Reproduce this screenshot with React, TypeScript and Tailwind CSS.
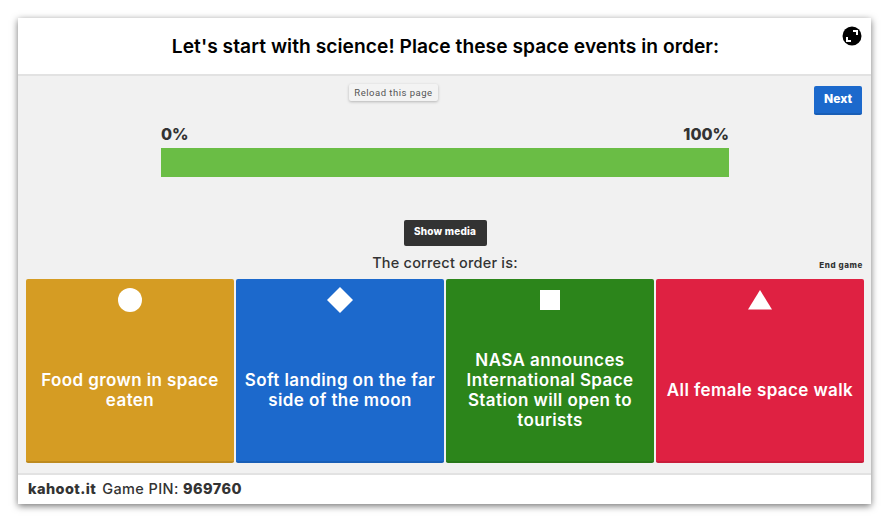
const font = { fontFamily: "Inter, 'Noto Sans', sans-serif" };

const answers = [
  { text: "Food grown in space eaten", bg: "bg-[#d59c23]", edge: "border-[#bd8a1f]", shape: "circle" },
  { text: "Soft landing on the far side of the moon", bg: "bg-[#1c69cc]", edge: "border-[#195eb6]", shape: "diamond" },
  { text: "NASA announces International Space Station will open to tourists", bg: "bg-[#2c851b]", edge: "border-[#277718]", shape: "square" },
  { text: "All female space walk", bg: "bg-[#df2142]", edge: "border-[#c81d3b]", shape: "triangle" },
];

function Shape({ shape }: { shape: string }) {
  return (
    <svg width="28" height="28" viewBox="0 0 28 28" fill="#fff">
      {shape === "circle" && <circle cx="14" cy="14" r="12" />}
      {shape === "diamond" && <path d="M14 1 27 14 14 27 1 14Z" />}
      {shape === "square" && <rect x="4" y="4" width="20" height="20" />}
      {shape === "triangle" && <path d="M14 4 26 23.500H2Z" />}
    </svg>
  );
}

export default function App() {
  return (
    <div className="h-[522px] w-[890px] overflow-hidden bg-white pl-[18px] pt-[18px]" style={font}>
      <div className="relative flex h-[486px] w-[853px] flex-col bg-[#f1f1f1] shadow-[0_2px_7px_rgba(0,0,0,0.55)]">
        {/* Title */}
        <div className="flex h-[58px] items-center justify-center border-b-2 border-[#e2e2e2] bg-white pl-[2px]">
          <h1 className="text-[19.2px] font-semibold tracking-[0.05px] text-black">
            Let's start with science! Place these space events in order:
          </h1>
        </div>

        <button className="absolute right-[9px] top-[8px]">
          <svg width="20" height="20" viewBox="0 0 20 20" className="block">
            <circle cx="10" cy="10" r="9.500" fill="#000" />
            <path d="M11 5h4v4M9 15H5v-4" fill="none" stroke="#fff" strokeWidth="2" />
          </svg>
        </button>

        <span className="absolute left-[331px] top-[66px] flex h-[17px] w-[89px] items-center justify-center rounded-[2px] bg-[#f3f3f3] pt-[1px] text-[9.500px] tracking-[0.5px] text-[#555] shadow-[0_1px_3px_rgba(0,0,0,0.25)]" style={{ fontFamily: "Roboto, sans-serif" }}>
          Reload this page
        </span>

        <button className="absolute right-[9px] top-[68px] h-[29px] w-[48px] rounded-[2px] border-b-2 border-[#195eb6] bg-[#1c69cc] pb-[2px] text-[12px] font-extrabold text-white">
          Next
        </button>

        {/* Game area */}
        <div className="flex flex-1 flex-col items-center pl-[8px] pr-[7px]">
          <div className="mt-[48px] w-[568px]">
            <div className="flex justify-between text-[16px] font-extrabold leading-[20px] text-[#333]">
              <span>0%</span>
              <span>100%</span>
            </div>
            <div className="mt-[4px] h-[29px] bg-[#6abd45]" />
          </div>

          <button className="mt-[43px] h-[26px] w-[83px] rounded-[2px] bg-[#333] pb-[3px] text-[10px] font-extrabold tracking-[0.2px] text-white">
            Show media
          </button>

          <div className="relative mt-[6px] flex h-[21px] w-full items-center justify-center">
            <span className="text-[14.500px] font-medium tracking-[0.2px] text-[#333]">The correct order is:</span>
            <span className="absolute right-[1px] top-[7px] text-[8px] font-extrabold tracking-[0.6px] text-[#333]">End game</span>
          </div>

          <div className="mt-[6px] grid w-full grid-cols-4 gap-[2px]">
            {answers.map((a) => (
              <div key={a.text} className={`flex h-[184px] flex-col items-center rounded-[2px] border-b-2 ${a.bg} ${a.edge}`}>
                <div className="flex h-[35px] items-end">
                  <Shape shape={a.shape} />
                </div>
                <div className="flex flex-1 items-center justify-center px-[6px] pt-[4px] text-center text-[17px] font-semibold leading-[20px] tracking-[0.4px] text-white">
                  {a.text}
                </div>
              </div>
            ))}
          </div>
        </div>

        {/* Footer */}
        <div className="flex h-[31px] items-center gap-[6px] border-t-2 border-[#e2e2e2] bg-white pb-[1px] pl-[10px] text-[14.500px] tracking-[0.4px] text-[#333]">
          <span className="font-extrabold">kahoot.it</span>
          <span className="font-medium">Game PIN: <span className="font-extrabold">969760</span></span>
        </div>
      </div>
    </div>
  );
}
